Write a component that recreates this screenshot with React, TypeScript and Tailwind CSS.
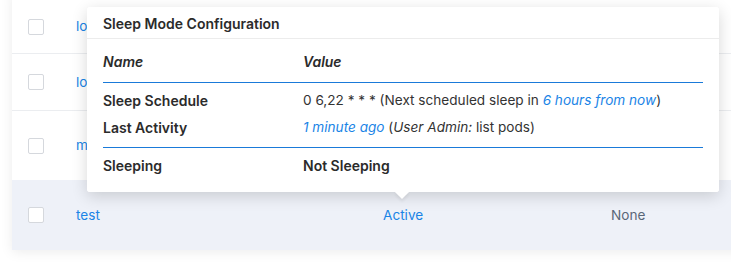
import React from "react";

const font = { fontFamily: "Inter, 'Noto Sans', 'Liberation Sans', sans-serif" };

function Row({ h, name, bg, border, status, none }: { h: string; name: string; bg?: boolean; border?: boolean; status?: string; none?: string }) {
  return (
    <div className={`flex items-center ${h} ${bg ? "bg-[#eef1f8]" : "bg-white"} ${border ? "border-b border-solid border-b-[#ebedf0]" : ""}`}>
      <div className="w-[64px] pl-4 flex items-center">
        <div className="w-[16px] h-[16px] rounded-[2px] border border-solid border-[#d5d8dd] bg-white" />
      </div>
      <div className="w-[307px] text-[13.6px] text-[#1a84e6]">{name}</div>
      <div className="w-[228px] text-[13.6px] text-[#1a84e6]">{status}</div>
      <div className="text-[13.6px] text-[#5a6779]">{none}</div>
    </div>
  );
}

export default function App() {
  return (
    <div className="relative w-[731px] h-[263px] bg-white overflow-hidden" style={font}>
      <div className="ml-[12px] w-[740px] -mt-[10px] bg-white shadow-[0_2px_12px_rgba(0,0,0,0.08)] flex flex-col">
        <Row h="h-[64px] pt-[10px]" name="lo" border />
        <Row h="h-[57px]" name="lo" border />
        <Row h="h-[69px]" name="m" />
        <Row h="h-[70px]" name="test" bg status="Active" none="None" />
      </div>

      <div className="absolute left-[87px] top-[7px] w-[632px] h-[185px] bg-white rounded-[3px] shadow-[0_4px_16px_rgba(0,0,0,0.16)]">
        <div className="absolute left-[310px] -bottom-[5px] w-[10px] h-[10px] bg-white rotate-45 shadow-[2px_2px_3px_rgba(0,0,0,0.06)]" />
        <div className="relative bg-white rounded-[3px] h-full">
          <div className="h-[32px] px-4 pt-[1px] flex items-center border-b border-solid border-b-[#ececec] text-[14px] font-semibold text-[#2b2b2b]">
            Sleep Mode Configuration
          </div>
          <div className="px-4 text-[13.6px] text-[#333]">
            <div className="h-[44px] pt-[2px] flex items-center border-b border-solid border-b-[#1a7ad9] text-[14px] font-semibold italic text-[#2b2b2b]">
              <div className="w-[200px]">Name</div>
              <div>Value</div>
            </div>
            <div className="pt-[7px] pb-[10px] flex flex-col gap-[7px] border-b border-solid border-b-[#1a7ad9]">
              <div className="h-[20px] flex items-center">
                <div className="w-[200px] text-[14px] font-semibold text-[#2b2b2b]">Sleep Schedule</div>
                <div>
                  0 6,22 * * * (Next scheduled sleep in <span className="italic text-[#1a84e6]">6 hours from now</span>)
                </div>
              </div>
              <div className="h-[20px] flex items-center">
                <div className="w-[200px] text-[14px] font-semibold text-[#2b2b2b]">Last Activity</div>
                <div>
                  <span className="italic text-[#1a84e6]">1 minute ago</span> (<span className="italic">User Admin:</span> list pods)
                </div>
              </div>
            </div>
            <div className="pt-[7px] h-[27px] flex items-center text-[14px] font-semibold text-[#2b2b2b]">
              <div className="w-[200px]">Sleeping</div>
              <div>Not Sleeping</div>
            </div>
          </div>
        </div>
      </div>
    </div>
  );
}
